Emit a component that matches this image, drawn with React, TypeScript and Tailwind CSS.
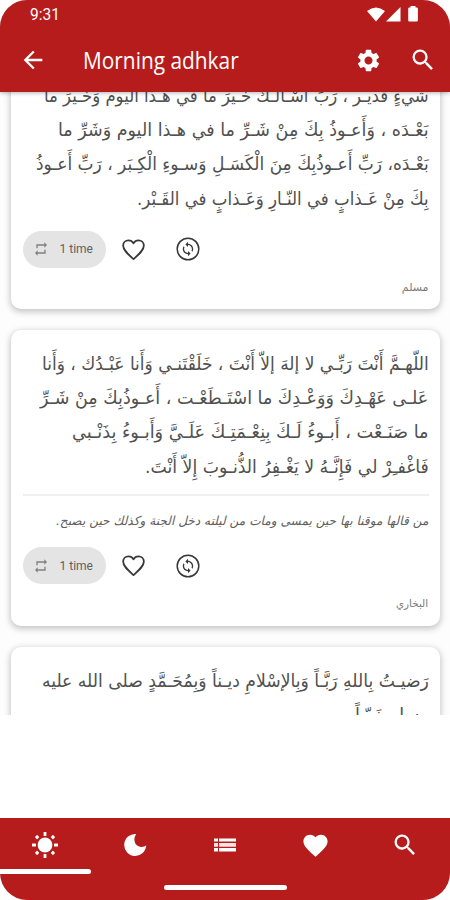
import { useLayoutEffect, useRef, type ReactNode } from "react";
import { MdArrowBack, MdFavorite, MdRepeat, MdSearch, MdSettings } from "react-icons/md";

type FitProps = { width: number; className?: string; origin?: "left" | "right"; children: ReactNode };

/* One unwrapped run of text, condensed or widened horizontally to a given measure. */
function Fit({ width, className = "", origin = "right", children }: FitProps) {
  const ref = useRef<HTMLSpanElement>(null);
  useLayoutEffect(() => {
    const el = ref.current;
    if (!el) return;
    el.style.transformOrigin = origin;
    el.style.transform = `scaleX(${width / el.offsetWidth})`;
  }, [width, origin]);
  return (
    <div className={`flex whitespace-nowrap ${className}`}>
      <span ref={ref} className="block shrink-0">{children}</span>
    </div>
  );
}

type Line = [text: string, width: number];

function Verse({ lines }: { lines: Line[] }) {
  return (
    <div dir="rtl" className="font-['DejaVu_Sans',sans-serif] text-[18px] leading-[34.2px] text-[#505050]">
      {lines.map(([text, width]) => (
        <Fit key={text} width={width}>{text}</Fit>
      ))}
    </div>
  );
}

function SyncCircle() {
  return (
    <svg viewBox="0 0 24 24" className="size-6" fill="none">
      <circle cx="12" cy="12" r="10.8" stroke="#383838" strokeWidth="1.5" />
      <path
        transform="translate(4.2 4.2) scale(.65)"
        fill="#383838"
        d="M12 4V1L8 5l4 4V6c3.31 0 6 2.69 6 6 0 1.01-.25 1.97-.7 2.8l1.46 1.46C19.54 15.03 20 13.57 20 12c0-4.42-3.58-8-8-8zm0 14c-3.31 0-6-2.69-6-6 0-1.01.25-1.97.7-2.8L5.24 7.74C4.46 8.97 4 10.43 4 12c0 4.42 3.58 8 8 8v3l4-4-4-4v3z"
      />
    </svg>
  );
}

function HeartOutline() {
  return (
    <svg viewBox="0 0 24 24" className="ml-[14px] size-[27px]" fill="none" stroke="currentColor" strokeWidth="1.6" strokeLinejoin="round">
      <path d="M12 20.6C7.2 16.2 2.8 12.6 2.8 8.5c0-2.7 2-4.7 4.7-4.7 1.8 0 3.6 1 4.5 2.6.9-1.6 2.700-2.600 4.500-2.600 2.700 0 4.700 2 4.700 4.700 0 4.100-4.400 7.700-9.200 12.100Z" />
    </svg>
  );
}

function Actions() {
  return (
    <div className="flex h-[37px] items-center text-[#383838]">
      <div className="flex h-[37px] w-[83px] items-center rounded-full bg-[#e4e4e4] pl-[10px]">
        <MdRepeat className="size-4 text-[#808080]" />
        <Fit width={33} origin="left" className="ml-[11px] font-[Roboto,sans-serif] text-[12px] leading-4 text-[#606060]">1 time</Fit>
      </div>
      <HeartOutline />
      <div className="ml-[29px]"><SyncCircle /></div>
    </div>
  );
}

function Source({ text, width }: { text: string; width: number }) {
  return (
    <div dir="rtl" className="font-['DejaVu_Sans',sans-serif] text-[11px] leading-4 text-[#7a7a7a]">
      <Fit width={width}>{text}</Fit>
    </div>
  );
}

const card = "mx-[10.5px] shrink-0 rounded-[10px] bg-white pl-3 pr-[11px] shadow-[0_2px_6px_1px_rgba(0,0,0,0.22)]";

const first: Line[] = [
  ["شَيءٍ قَديـر ، رَبِّ أسْـأَلُـكَ خَـيرَ ما في هـذا اليوم وَخَـيرَ ما", 385],
  ["بَعْـدَه ، وَأَعـوذُ بِكَ مِنْ شَـرِّ ما في هـذا اليوم وَشَرِّ ما", 371],
  ["بَعْـدَه، رَبِّ أَعـوذُبِكَ مِنَ الْكَسَـلِ وَسـوءِ الْكِـبَر ، رَبِّ أَعـوذُ", 393],
  ["بِكَ مِنْ عَـذابٍ في النّـارِ وَعَـذابٍ في القَـبْر.", 292],
];
const second: Line[] = [
  ["اللّهـمَّ أَنْتَ رَبِّـي لا إلهَ إلاّ أَنْتَ ، خَلَقْتَنـي وَأَنا عَبْـدُك ، وَأَنا", 387],
  ["عَلـى عَهْـدِكَ وَوَعْـدِكَ ما اسْتَـطَعْـت ، أَعـوذُبِكَ مِنْ شَـرِّ", 388],
  ["ما صَنَـعْت ، أَبـوءُ لَـكَ بِنِعْـمَتِـكَ عَلَـيَّ وَأَبـوءُ بِذَنْـبي", 357],
  ["فَاغْفـِرْ لي فَإِنَّـهُ لا يَغْـفِرُ الذُّنـوبَ إِلاّ أَنْتَ.", 284],
];
const third: Line[] = [
  ["رَضيـتُ بِاللهِ رَبَّـاً وَبِالإسْلامِ ديـناً وَبِمُحَـمَّدٍ صلى الله عليه", 387],
  ["وسلم نَبِيّـاً", 73],
];

function Header() {
  return (
    <header className="relative z-10 flex h-[92px] shrink-0 flex-col bg-[#b71c1c] text-white shadow-[0_1px_4px_rgba(0,0,0,0.3)]">
      <div className="flex h-[28px] items-center pl-[30px] pr-[31px] pt-[1px]">
        <Fit width={30} origin="left" className="grow font-[Roboto,sans-serif] text-[16px]">9:31</Fit>
        <svg viewBox="0 0 52 17" className="h-[17px] w-[52px]" fill="currentColor">
          <path d="M0 5 Q9-2 18 5 L9 15.5Z" />
          <path d="M33.500 1 V15.500 H19Z" />
          <path d="M43.500 0h5v1.600h1.200q1.200 0 1.200 1.200v11.500q0 1.200-1.200 1.200h-7.300q-1.200 0-1.200-1.200V2.800q0-1.200 1.200-1.200h1.100Z" />
        </svg>
      </div>
      <div className="flex h-[64px] items-center pl-[19px] pr-[13px]">
        <MdArrowBack className="size-7" />
        <Fit width={156} origin="left" className="ml-[36px] grow font-['Open_Sans',sans-serif] text-[23px] leading-8">Morning adhkar</Fit>
        <MdSettings className="mr-[27px] size-[27px]" />
        <MdSearch className="size-7" />
      </div>
    </header>
  );
}

function Sun() {
  return (
    <svg viewBox="-14 -14 28 28" className="size-7" fill="currentColor">
      <circle r="7.4" />
      {[0, 90, 180, 270].map((a) => <rect key={a} x="-1.4" y="-13" width="2.8" height="4" rx=".5" transform={`rotate(${a})`} />)}
      {[45, 135, 225, 315].map((a) => <rect key={a} x="-1.6" y="-12.800" width="3.2" height="3.2" rx=".6" transform={`rotate(${a})`} />)}
    </svg>
  );
}

function Moon() {
  return (
    <svg viewBox="0 0 24 24" className="size-6" fill="currentColor">
      <path d="M13.200 1A11 11 0 1 0 23.200 12.300C21.500 13.800 19.300 14.300 17 13.700C11.300 12.200 9.800 6.300 13.200 1Z" />
    </svg>
  );
}

function List() {
  return (
    <svg viewBox="0 0 22 14" className="h-[14px] w-[22px]" fill="currentColor">
      <path d="M0 .5h4v3H0zM5 .5h17v3H5zM0 10h4v3.500H0zM5 10h17v3.500H5z" />
      <path opacity=".88" d="M0 5h4v3.800H0zM5 5h17v3.800H5z" />
    </svg>
  );
}

function Navigation() {
  return (
    <nav className="flex h-[82px] shrink-0 flex-col rounded-b-[27px] bg-[#b71c1c] text-white">
      <div className="grid h-[51px] grid-cols-5 place-items-center pt-[3px]">
        <Sun />
        <Moon />
        <List />
        <MdFavorite className="size-[29px]" />
        <MdSearch className="size-[28px]" />
      </div>
      <div className="h-[5px] w-[91px] rounded-r-sm bg-white" />
      <div className="ml-[164px] mt-[10.5px] h-[5px] w-[123px] rounded-full bg-white" />
    </nav>
  );
}

export default function App() {
  return (
    <div className="h-[900px] w-[450px] overflow-hidden bg-white">
      <div className="flex h-full flex-col overflow-hidden rounded-t-[27px]">
        <Header />
        <main className="flex h-[623px] shrink-0 flex-col overflow-hidden bg-[#fdfdfd]">
          <article className={`${card} -mt-[22px] h-[238.5px] pt-[9px]`}>
            <Verse lines={first} />
            <div className="mt-[15px]"><Actions /></div>
            <div className="mt-[12px]"><Source text="مسلم" width={27} /></div>
          </article>
          <article className={`${card} mt-[21px] h-[296px] pt-[17.5px]`}>
            <Verse lines={second} />
            <div className="mt-[10px] h-[2px] bg-[#f0f0f0]" />
            <div dir="rtl" className="mt-[15px] font-['DejaVu_Sans',sans-serif] text-[12.5px] italic leading-5 text-[#606060]">
              <Fit width={372}>من قالها موقنا بها حين يمسى ومات من ليلته دخل الجنة وكذلك حين يصبح.</Fit>
            </div>
            <div className="mt-[16.5px]"><Actions /></div>
            <div className="mt-[12px]"><Source text="البخاري" width={32} /></div>
          </article>
          <article className={`${card} mt-[21px] h-[238px] pt-[17.5px]`}>
            <Verse lines={third} />
          </article>
        </main>
        <div className="grow bg-white" />
        <Navigation />
      </div>
    </div>
  );
}
